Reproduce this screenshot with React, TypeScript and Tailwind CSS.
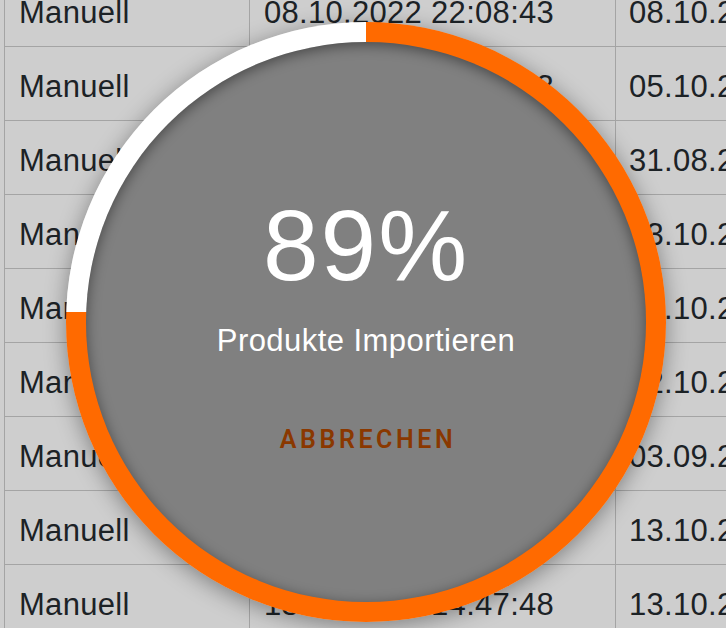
import React from 'react';

type Row = { source: string; created: string; updated: string };

const rows: Row[] = [
  { source: 'Manuell', created: '08.10.2022 22:08:43', updated: '08.10.2022 22:10:12' },
  { source: 'Manuell', created: '05.10.2022 10:32:13', updated: '05.10.2022 10:40:02' },
  { source: 'Manuell', created: '31.08.2022 09:14:27', updated: '31.08.2022 09:20:51' },
  { source: 'Manuell', created: '13.10.2022 08:51:09', updated: '13.10.2022 08:55:40' },
  { source: 'Manuell', created: '14.10.2022 11:03:22', updated: '14.10.2022 11:05:16' },
  { source: 'Manuell', created: '12.10.2022 16:45:38', updated: '12.10.2022 16:48:02' },
  { source: 'Manuell', created: '03.09.2022 07:29:54', updated: '03.09.2022 07:31:10' },
  { source: 'Manuell', created: '13.10.2022 14:46:12', updated: '13.10.2022 14:50:33' },
  { source: 'Manuell', created: '13.10.2022 14:47:48', updated: '13.10.2022 14:52:19' },
];

function ProgressOverlay() {
  return (
    <div className="absolute left-[66px] top-[22px] w-[600px] h-[600px] rounded-full p-[20px] bg-[conic-gradient(#ff6a00_0deg_272deg,#ffffff_272deg_360deg)] shadow-[0_4px_22px_rgba(0,0,0,0.38)]">
      <div className="w-full h-full rounded-full bg-[#808080] shadow-[inset_0_3px_14px_rgba(0,0,0,0.45)] flex flex-col items-center pt-[153px]">
        <div className="text-white text-[100px] leading-none tracking-[2px] font-['Liberation_Sans',Arial,sans-serif]">89%</div>
        <div className="mt-[30px] text-white text-[31px] leading-none tracking-[0.45px] font-['Liberation_Sans',Arial,sans-serif]">
          Produkte Importieren
        </div>
        <button
          type="button"
          className="mt-[71px] pl-[4px] text-[#8a3800] text-[25px] leading-none font-semibold tracking-[3.6px] font-['Roboto',sans-serif]"
        >
          ABBRECHEN
        </button>
      </div>
    </div>
  );
}

export default function App() {
  return (
    <div className="relative w-[726px] h-[628px] overflow-hidden bg-[#cecece]">
      <div className="mt-[-27px] ml-[4px] border-l border-[#a4a4a4] text-[#1c2226] text-[31px] tracking-[0.3px] font-['Liberation_Sans',Arial,sans-serif]">
        {rows.map((r, i) => (
          <div key={i} className="flex h-[74px] border-b border-[#a4a4a4]">
            <div className="w-[244px] shrink-0 pl-[14px] pt-[8px] flex items-center whitespace-nowrap overflow-hidden">
              {r.source}
            </div>
            <div className="w-[366px] shrink-0 pl-[14px] pt-[8px] flex items-center whitespace-nowrap overflow-hidden border-l border-[#a4a4a4]">
              {r.created}
            </div>
            <div className="w-[400px] shrink-0 pl-[13px] pt-[8px] flex items-center whitespace-nowrap overflow-hidden border-l border-[#a4a4a4]">
              {r.updated}
            </div>
          </div>
        ))}
      </div>
      <ProgressOverlay />
    </div>
  );
}
